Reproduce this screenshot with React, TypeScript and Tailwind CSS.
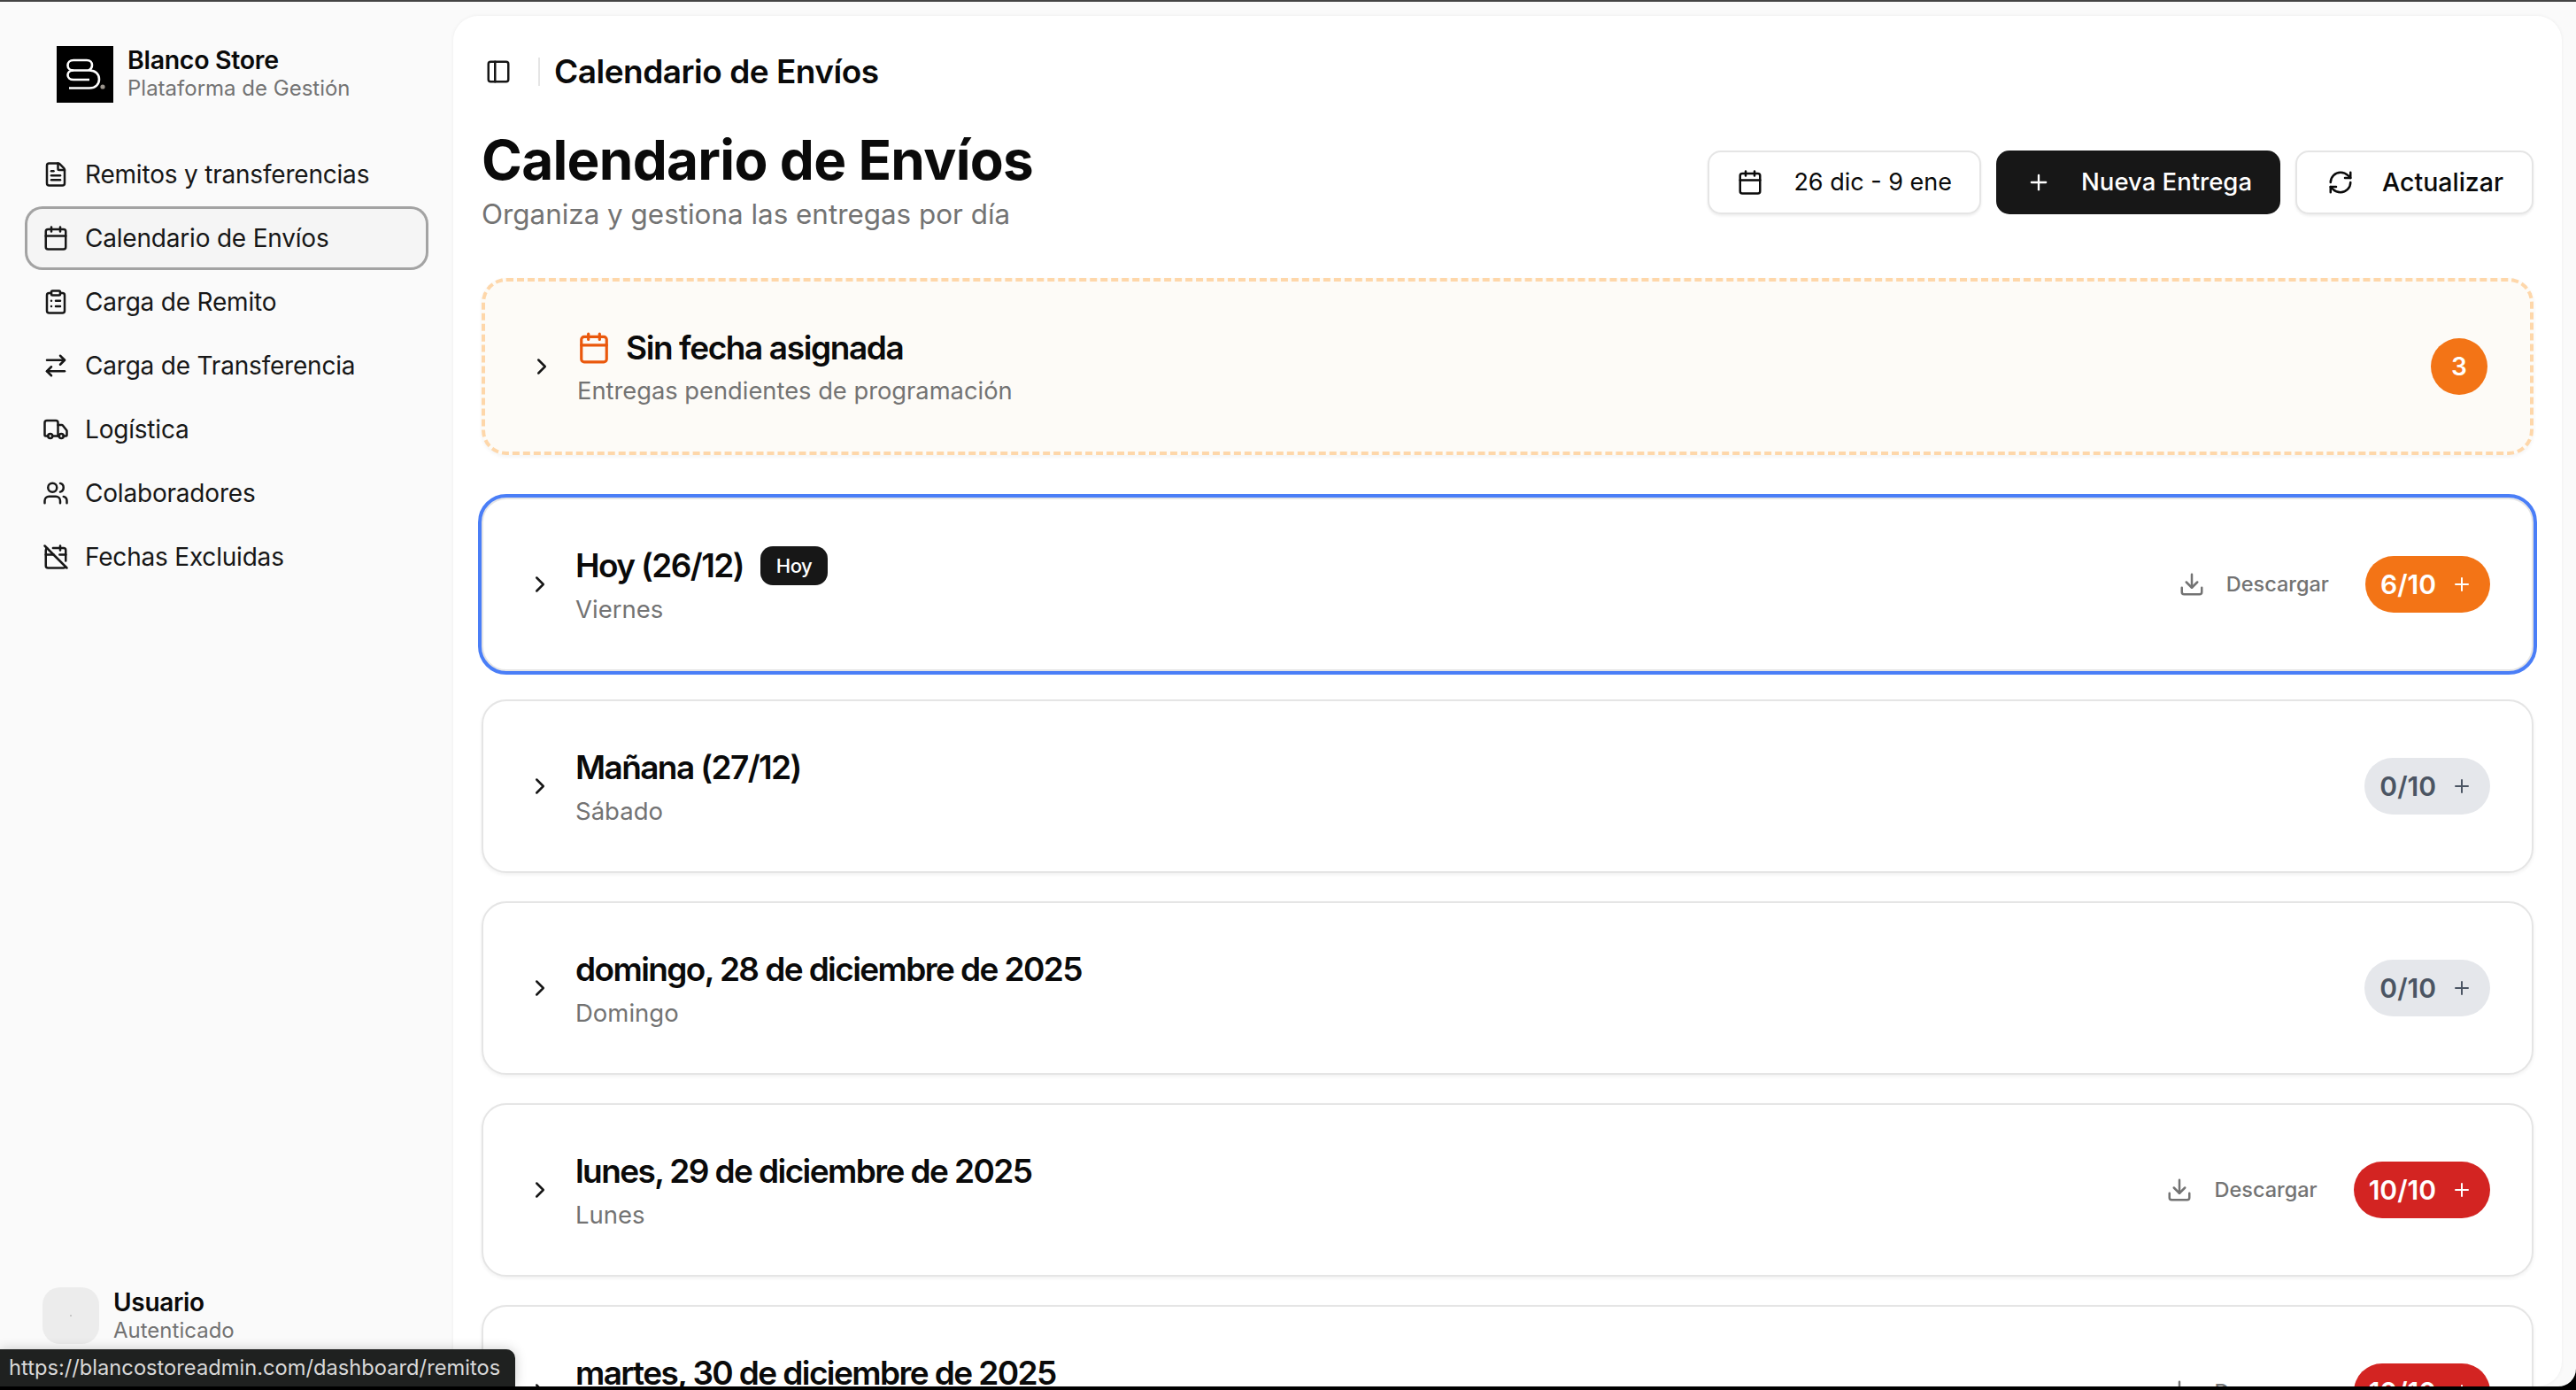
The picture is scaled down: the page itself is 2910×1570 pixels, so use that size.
import {
  ArrowRightLeft,
  Calendar,
  CalendarOff,
  ChevronRight,
  ClipboardList,
  Download,
  FileText,
  PanelLeft,
  Plus,
  RefreshCw,
  Truck,
  Users,
} from 'lucide-react';

const NAV = [
  { label: 'Remitos y transferencias', icon: FileText },
  { label: 'Calendario de Envíos', icon: Calendar, active: true },
  { label: 'Carga de Remito', icon: ClipboardList },
  { label: 'Carga de Transferencia', icon: ArrowRightLeft },
  { label: 'Logística', icon: Truck },
  { label: 'Colaboradores', icon: Users },
  { label: 'Fechas Excluidas', icon: CalendarOff },
];

const DAYS = [
  { title: 'Hoy (26/12)', sub: 'Viernes', count: '6/10', tone: 'orange', today: true, download: true },
  { title: 'Mañana (27/12)', sub: 'Sábado', count: '0/10', tone: 'gray' },
  { title: 'domingo, 28 de diciembre de 2025', sub: 'Domingo', count: '0/10', tone: 'gray' },
  { title: 'lunes, 29 de diciembre de 2025', sub: 'Lunes', count: '10/10', tone: 'red', download: true },
  { title: 'martes, 30 de diciembre de 2025', sub: 'Martes', count: '10/10', tone: 'red', download: true },
];

const PILL: Record<string, string> = {
  orange: 'bg-[#f37416] text-white',
  gray: 'bg-[#e5e7eb] text-[#4b5563]',
  red: 'bg-[#d32422] text-white',
};

function Logo() {
  return (
    <div className="flex h-[64px] w-[64px] shrink-0 items-center justify-center bg-black">
      <svg viewBox="0 1 64 64" className="h-[64px] w-[64px]" fill="none" stroke="#fff" strokeWidth="2.6">
        <path d="M14 48.5H37C44 48.5 48 44 48 38.5C48 33 44 28.5 37 28.5H19C15 28.5 12.5 26 12.5 22.7C12.5 19.5 15 17 19 17H34C38 17 40 19.5 40 22.5C40 25 39 27 36 28.5" />
        <path d="M37 39H19C15 39 12.5 36.5 12.5 33.7C12.5 31 15 28.5 19 28.5" />
        <circle cx="52" cy="47" r="2.6" fill="#9a948c" stroke="none" />
      </svg>
    </div>
  );
}

function DayCard({ day }: { day: (typeof DAYS)[number] }) {
  return (
    <div
      className={`flex h-[196px] shrink-0 items-center rounded-[28px] border-2 border-[#e5e5e5] bg-white pl-[49px] pr-[47px] shadow-[0_2px_4px_rgba(0,0,0,0.06)] ${
        day.today ? 'outline-[4px] outline-solid outline-[#4a7ef7]' : ''
      }`}
    >
      <ChevronRight size={30} strokeWidth={2} className="shrink-0 text-[#171717]" />
      <div className="ml-[25px] flex flex-col pt-[5px]">
        <div className="flex h-[44px] items-center gap-[19px]">
          <h3 className="text-[37px] font-semibold tracking-[-1.6px] text-[#0a0a0a]">{day.title}</h3>
          {day.today && (
            <span className="flex h-[44px] w-[76px] items-center justify-center rounded-[14px] bg-[#171717] text-[22px] font-medium tracking-[-0.5px] text-white">
              Hoy
            </span>
          )}
        </div>
        <p className="mt-[7px] text-[27.5px] leading-[40px] text-[#737373]">{day.sub}</p>
      </div>
      <div className="ml-auto flex items-center">
        {day.download && (
          <div className="mr-[41px] flex items-center gap-[24px] text-[#737373]">
            <Download size={30} strokeWidth={2} />
            <span className="text-[23.5px] font-medium">Descargar</span>
          </div>
        )}
        <div
          className={`flex h-[64px] items-center gap-[17px] rounded-full pl-[17px] pr-[20px] text-[30px] font-semibold ${PILL[day.tone]}`}
        >
          <span>{day.count}</span>
          <Plus size={24} strokeWidth={2} />
        </div>
      </div>
    </div>
  );
}

export default function App() {
  return (
    <div className="relative h-[1570px] w-[2910px] overflow-hidden bg-black font-['Inter',sans-serif]">
      <div className="flex h-[1566px] flex-col overflow-hidden rounded-br-[20px] bg-[#fafafa]">
        <div className="h-[2px] shrink-0 bg-[#444444]" />
        <div className="flex min-h-0 flex-1">
          {/* Sidebar */}
          <aside className="flex w-[512px] shrink-0 flex-col px-[28px] pb-[48px] pt-[50px]">
            <div className="flex items-center gap-[16px] pl-[36px]">
              <Logo />
              <div className="flex flex-col">
                <span className="text-[28.5px] font-semibold leading-[32px] tracking-[-0.3px] text-[#0a0a0a]">Blanco Store</span>
                <span className="text-[24px] leading-[32px] text-[#737373]">Plataforma de Gestión</span>
              </div>
            </div>
            <nav className="mt-[45px] flex flex-col">
              {NAV.map((item) => (
                <div
                  key={item.label}
                  className={`flex h-[72px] items-center gap-[18px] rounded-[20px] pl-[20px] text-[28px] text-[#171717] ${
                    item.active ? 'bg-[#f5f5f5] ring-[3px] ring-inset ring-[#a3a3a3]' : ''
                  }`}
                >
                  <item.icon size={30} strokeWidth={2} className="shrink-0" />
                  <span className="tracking-[-0.2px]">{item.label}</span>
                </div>
              ))}
            </nav>
            <div className="mt-auto flex items-center gap-[16px] pl-[20px]">
              <div className="flex h-[64px] w-[64px] items-center justify-center rounded-[20px] bg-[#ececec]">
                <div className="h-[2px] w-[2px] rounded-full bg-[#bbbbbb]" />
              </div>
              <div className="flex flex-col">
                <span className="text-[28px] font-semibold leading-[34px] tracking-[-0.3px] text-[#0a0a0a]">Usuario</span>
                <span className="text-[24px] leading-[30px] text-[#737373]">Autenticado</span>
              </div>
            </div>
          </aside>

          {/* Main panel */}
          <main className="mr-[16px] mt-[16px] flex min-w-0 flex-1 flex-col overflow-hidden rounded-[28px] bg-white px-[32px] pt-[31px] shadow-[0_0_4px_rgba(0,0,0,0.06)]">
            <div className="flex h-[64px] shrink-0 items-center">
              <PanelLeft size={30} strokeWidth={2} className="ml-[4px] text-[#171717]" />
              <div className="ml-[30px] h-[32px] w-[2px] bg-[#e5e5e5]" />
              <span className="ml-[16px] text-[37px] font-semibold tracking-[-0.5px] text-[#0a0a0a]">Calendario de Envíos</span>
            </div>

            <div className="mt-[38px] flex shrink-0 items-center justify-between">
              <div>
                <h1 className="text-[62px] font-bold leading-[60px] tracking-[-0.7px] text-[#0a0a0a]">Calendario de Envíos</h1>
                <p className="mt-[9px] text-[31.4px] leading-[44px] text-[#737373]">Organiza y gestiona las entregas por día</p>
              </div>
              <div className="mb-[3px] flex items-center gap-[17px]">
                <button className="flex h-[72px] items-center gap-[34px] rounded-[15px] border-2 border-[#e5e5e5] bg-white pl-[31px] pr-[31px] text-[27px] text-[#0a0a0a] shadow-[0_2px_3px_rgba(0,0,0,0.07)]">
                  <Calendar size={30} strokeWidth={2} />
                  <span>26 dic - 9 ene</span>
                </button>
                <button className="flex h-[72px] items-center gap-[34px] rounded-[15px] bg-[#171717] pl-[34px] pr-[32px] text-[27.5px] font-medium text-white">
                  <Plus size={28} strokeWidth={2} />
                  <span>Nueva Entrega</span>
                </button>
                <button className="flex h-[72px] items-center gap-[32px] rounded-[15px] border-2 border-[#e5e5e5] bg-white pl-[34px] pr-[32px] text-[28.5px] font-medium text-[#0a0a0a] shadow-[0_2px_3px_rgba(0,0,0,0.07)]">
                  <RefreshCw size={30} strokeWidth={2} />
                  <span>Actualizar</span>
                </button>
              </div>
            </div>

            <div className="mt-[50px] flex h-[200px] shrink-0 items-center rounded-[28px] border-[4px] border-dashed border-[#fed7aa] bg-[#fdfbf7] pl-[49px] pr-[48px] shadow-[0_2px_4px_rgba(0,0,0,0.05)]">
              <ChevronRight size={30} strokeWidth={2} className="shrink-0 text-[#171717]" />
              <div className="ml-[25px] flex flex-col pt-[5px]">
                <div className="flex h-[44px] items-center gap-[17px]">
                  <Calendar size={38} strokeWidth={2} className="text-[#ea580c]" />
                  <h3 className="text-[37px] font-semibold tracking-[-1.4px] text-[#0a0a0a]">Sin fecha asignada</h3>
                </div>
                <p className="mt-[7px] text-[27.3px] leading-[40px] text-[#737373]">Entregas pendientes de programación</p>
              </div>
              <div className="ml-auto flex h-[64px] w-[64px] items-center justify-center rounded-full bg-[#f37416] text-[28px] font-semibold text-white">
                3
              </div>
            </div>

            <div className="mt-[48px] flex flex-col gap-[32px]">
              {DAYS.map((day) => (
                <DayCard key={day.title} day={day} />
              ))}
            </div>
          </main>
        </div>
      </div>

      {/* Browser link status */}
      <div className="absolute bottom-[4px] left-0 flex h-[42px] w-[582px] items-center rounded-tr-[10px] bg-[#1f2120] pl-[10px] text-[23.7px] text-[#d8d8d8] shadow-[0_0_14px_rgba(0,0,0,0.2)]">
        https://blancostoreadmin.com/dashboard/remitos
      </div>
    </div>
  );
}
